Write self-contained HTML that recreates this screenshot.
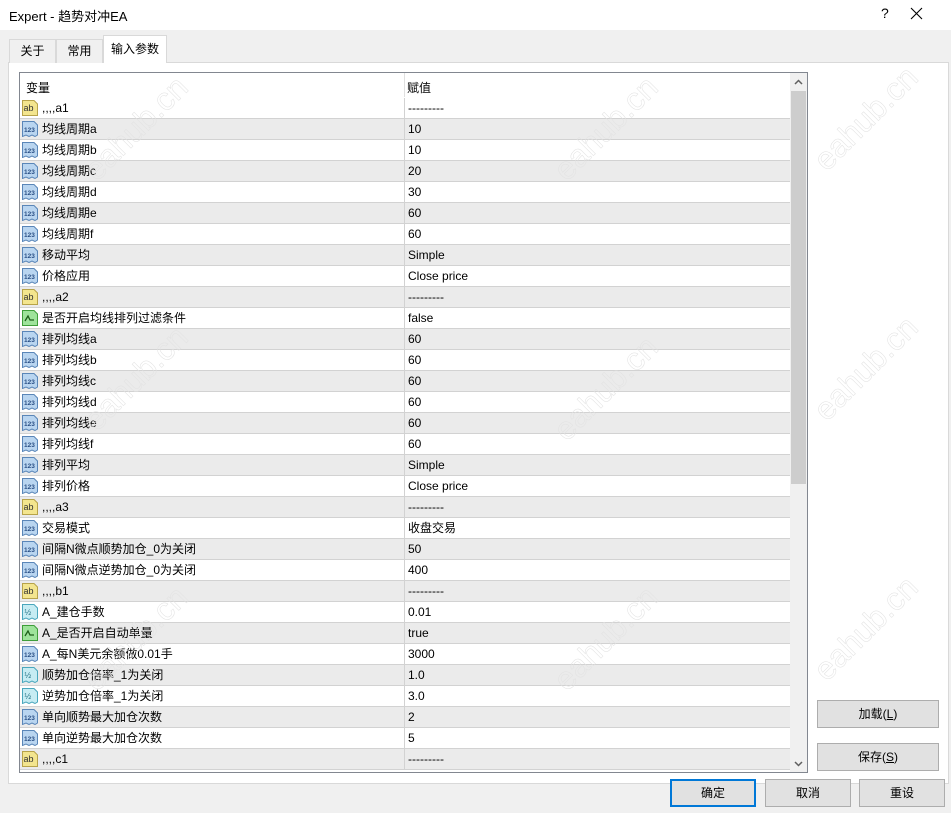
<!DOCTYPE html>
<html><head><meta charset="utf-8">
<style>
*{margin:0;padding:0;box-sizing:border-box}
body{width:951px;height:813px;background:#f0f0f0;font-family:"Liberation Sans","Microsoft YaHei","Noto Sans CJK SC",sans-serif;font-size:12px;color:#000;position:relative;overflow:hidden}
.abs{position:absolute}
.title{left:0;top:0;width:951px;height:30px;background:#fff}
.tab{position:absolute;top:39px;height:24px;background:#f0f0f0;border:1px solid #d9d9d9;border-bottom:none;line-height:22px;text-align:center;font-size:12px}
.panel{left:8px;top:62px;width:941px;height:722px;background:#fff;border:1px solid #d9d9d9}
.list{left:19px;top:72px;width:789px;height:701px;border:1px solid #828790;background:#fff;overflow:hidden}
.row{position:absolute;left:0;width:770px;height:21px;border-bottom:1px solid #d2d2d2;line-height:20px;font-size:12px}
.row.g{background:#ebebeb}
.row .n{position:absolute;left:22px;top:0}
.row .v{position:absolute;left:384px;top:0;height:21px;border-left:1px solid #d2d2d2;padding-left:3px}
.row svg{position:absolute;left:2px;top:2px}
.btn{position:absolute;background:#e1e1e1;border:1px solid #adadad;text-align:center;font-size:12px}
.wm{position:absolute;font-size:32px;color:transparent;-webkit-text-stroke:0.5px #e2e2e2;transform:rotate(-45deg);font-family:"Liberation Sans",sans-serif;white-space:nowrap}
</style></head><body>
<div class="abs title"></div>
<div class="abs" style="left:9px;top:6px;font-size:13px">Expert - 趋势对冲EA</div>
<div class="abs" style="left:881px;top:5px;font-size:14px">?</div>
<svg class="abs" style="left:910px;top:7px" width="13" height="13"><path d="M1 1L12 12M12 1L1 12" stroke="#000" stroke-width="1.1"/></svg>
<div class="abs panel"></div>
<div class="tab" style="left:9px;width:47px">关于</div>
<div class="tab" style="left:56px;width:47px">常用</div>
<div class="tab" style="left:103px;top:35px;width:64px;height:28px;background:#fff;line-height:26px">输入参数</div>
<div class="abs list">
<div class="abs" style="left:6px;top:6px">变量</div>
<div class="abs" style="left:384px;top:0;height:24px;border-left:1px solid #e0e0e0"></div>
<div class="abs" style="left:387px;top:6px">赋值</div>
<div id="rows"></div>
<div class="abs" style="left:770px;top:0;width:17px;height:699px;background:#f0f0f0"></div>
<div class="abs" style="left:771px;top:18px;width:15px;height:393px;background:#cdcdcd"></div>
<svg class="abs" style="left:774px;top:6px" width="9" height="6"><path d="M1 5L4.5 1.5L8 5" stroke="#606060" stroke-width="1.5" fill="none"/></svg>
<svg class="abs" style="left:774px;top:688px" width="9" height="6"><path d="M1 1L4.5 4.5L8 1" stroke="#606060" stroke-width="1.5" fill="none"/></svg>
</div>
<div class="wm" style="left:70px;top:110px">eahub.cn</div>
<div class="wm" style="left:540px;top:110px">eahub.cn</div>
<div class="wm" style="left:800px;top:100px">eahub.cn</div>
<div class="wm" style="left:70px;top:360px">eahub.cn</div>
<div class="wm" style="left:540px;top:370px">eahub.cn</div>
<div class="wm" style="left:800px;top:350px">eahub.cn</div>
<div class="wm" style="left:70px;top:620px">eahub.cn</div>
<div class="wm" style="left:540px;top:620px">eahub.cn</div>
<div class="wm" style="left:800px;top:610px">eahub.cn</div>
<div class="btn" style="left:817px;top:700px;width:122px;height:28px;line-height:26px">加载(<u>L</u>)</div>
<div class="btn" style="left:817px;top:743px;width:122px;height:28px;line-height:26px">保存(<u>S</u>)</div>
<div class="btn" style="left:670px;top:779px;width:86px;height:28px;line-height:24px;border:2px solid #0078d7">确定</div>
<div class="btn" style="left:765px;top:779px;width:86px;height:28px;line-height:26px">取消</div>
<div class="btn" style="left:859px;top:779px;width:86px;height:28px;line-height:26px">重设</div>
<script>
var icons={
ab:'<svg width="16" height="16"><path d="M0.5 0.5H12L15.5 4V15.5H0.5Z" fill="#f3e58e" stroke="#b7a34a"/><text x="1.5" y="11" font-size="9" font-family="Liberation Sans" fill="#333">ab</text></svg>',
n:'<svg width="16" height="16"><path d="M0.5 0.5H12L15.5 4V14L13 15.5L10 14L7 15.5L4 14L0.5 15.5Z" fill="#b9d5f0" stroke="#5a86b8"/><text x="2" y="11" font-size="6.5" font-weight="bold" font-family="Liberation Sans" fill="#2a4f85">123</text></svg>',
h:'<svg width="16" height="16"><path d="M0.5 0.5H12L15.5 4V14L13 15.5L10 14L7 15.5L4 14L0.5 15.5Z" fill="#c6ecf3" stroke="#4aa7bd"/><text x="2.5" y="11" font-size="8" font-family="Liberation Sans" fill="#1f6e80">½</text></svg>',
b:'<svg width="16" height="16"><path d="M0.5 0.5H12L15.5 4V15.5H0.5Z" fill="#9ee39b" stroke="#3e9e3a"/><path d="M3 11L6 6L8 10H12" stroke="#1d5e1a" stroke-width="1.3" fill="none"/></svg>'};
var d=[['ab',',,,,a1','---------'],['n','均线周期a','10'],['n','均线周期b','10'],['n','均线周期c','20'],['n','均线周期d','30'],['n','均线周期e','60'],['n','均线周期f','60'],['n','移动平均','Simple'],['n','价格应用','Close price'],['ab',',,,,a2','---------'],['b','是否开启均线排列过滤条件','false'],['n','排列均线a','60'],['n','排列均线b','60'],['n','排列均线c','60'],['n','排列均线d','60'],['n','排列均线e','60'],['n','排列均线f','60'],['n','排列平均','Simple'],['n','排列价格','Close price'],['ab',',,,,a3','---------'],['n','交易模式','收盘交易'],['n','间隔N微点顺势加仓_0为关闭','50'],['n','间隔N微点逆势加仓_0为关闭','400'],['ab',',,,,b1','---------'],['h','A_建仓手数','0.01'],['b','A_是否开启自动单量','true'],['n','A_每N美元余额做0.01手','3000'],['h','顺势加仓倍率_1为关闭','1.0'],['h','逆势加仓倍率_1为关闭','3.0'],['n','单向顺势最大加仓次数','2'],['n','单向逆势最大加仓次数','5'],['ab',',,,,c1','---------']];
var h='';d.forEach(function(r,i){h+='<div class="row'+(i%2?' g':'')+'" style="top:'+(25+i*21)+'px">'+icons[r[0]]+'<span class="n">'+r[1]+'</span><span class="v">'+r[2]+'</span></div>';});
document.getElementById('rows').innerHTML=h;
</script>
</body></html>
